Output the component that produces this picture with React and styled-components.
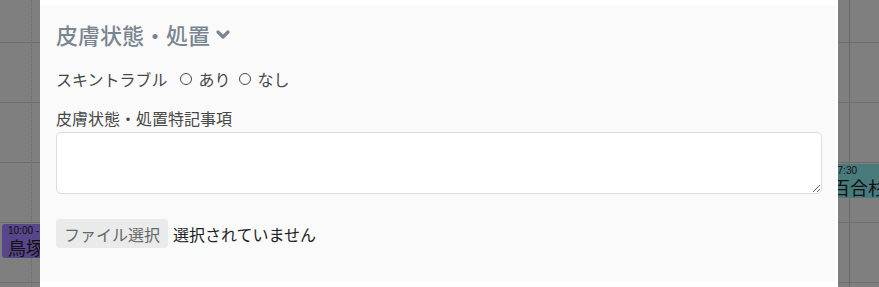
import React from "react";
import styled, { createGlobalStyle } from "styled-components";

const Global = createGlobalStyle`
  html, body { margin: 0; padding: 0; }
  body {
    width: 879px; height: 287px; overflow: hidden;
    font-family: "Noto Sans CJK JP", "Noto Sans", sans-serif;
    background: #808080;
  }
`;

const Stage = styled.div`
  position: relative;
  width: 879px;
  height: 287px;
  overflow: hidden;
  background: #7f7f7f;
`;

const Calendar = styled.div`
  position: absolute;
  inset: 0;
  background-image:
    repeating-linear-gradient(to bottom, transparent 0, transparent 42px, #6f6f6f 42px, #6f6f6f 43px, transparent 43px, transparent 60px);
`;

const VLine = styled.div`
  position: absolute;
  top: 0;
  bottom: 0;
  left: ${(p) => p.$x}px;
  width: 0;
  border-left: 1px ${(p) => (p.$dotted ? "dotted" : "solid")} #6a6a6a;
`;

const HLine = styled.div`
  position: absolute;
  left: 0;
  right: 0;
  top: ${(p) => p.$y}px;
  height: 1px;
  background: #6c6c6c;
`;

const Event = styled.div`
  position: absolute;
  left: ${(p) => p.$x}px;
  top: ${(p) => p.$y}px;
  width: ${(p) => p.$w}px;
  height: 34px;
  background: ${(p) => p.$bg};
  border-radius: 3px;
  padding: 1px 6px;
  box-sizing: border-box;
  color: #111;
  overflow: hidden;
  white-space: nowrap;
`;

const EventTime = styled.div`
  font-family: "Liberation Sans", Arial, sans-serif;
  font-size: 10px;
  line-height: 12px;
`;

const EventName = styled.div`
  font-size: 18px;
  line-height: 20px;
`;

const Modal = styled.div`
  position: absolute;
  left: 40px;
  top: 0;
  width: 798px;
  height: 287px;
  background: #ffffff;
  padding: 5px 2px 6px 0;
  box-sizing: border-box;
`;

const Section = styled.section`
  background: #fafafa;
  height: 100%;
  padding: 13px 14px 0 16px;
  box-sizing: border-box;
`;

const Title = styled.h3`
  margin: 0;
  font-size: 22px;
  line-height: 33px;
  font-weight: 500;
  color: #7a8592;
  display: flex;
  align-items: center;
  gap: 6px;
`;

const Row = styled.div`
  margin-top: 16px;
  display: flex;
  align-items: center;
  font-size: 16px;
  line-height: 24px;
  color: #474747;
`;

const RowLabel = styled.span`
  margin-right: 12px;
`;

const Radio = styled.span`
  display: inline-block;
  width: 10px;
  height: 10px;
  border: 1px solid #4a4a4a;
  border-radius: 50%;
  margin-right: 7px;
  margin-left: ${(p) => (p.$first ? 0 : 8)}px;
`;

const FieldLabel = styled.label`
  display: block;
  margin: 15px 0 2px;
  font-size: 16px;
  line-height: 24px;
  color: #474747;
`;

const TextArea = styled.textarea`
  display: block;
  width: 100%;
  height: 62px;
  box-sizing: border-box;
  border: 1px solid #dcdcdc;
  border-radius: 5px;
  background: #fff;
  margin: 0;
  resize: vertical;
  font-family: inherit;
`;

const FileRow = styled.div`
  margin-top: 25px;
  display: flex;
  align-items: center;
  font-size: 16px;
  color: #222;
`;

const FileButton = styled.span`
  display: inline-flex;
  align-items: center;
  height: 29px;
  padding: 0 8px;
  background: #e9eaea;
  border-radius: 4px;
  color: #666;
  margin-right: 5px;
`;

const Chevron = () => (
  <svg width="14" height="11" viewBox="0 0 14 11" aria-hidden="true">
    <polyline
      points="2,3 7,8 12,3"
      fill="none"
      stroke="#7a8592"
      strokeWidth="3.2"
      strokeLinecap="round"
      strokeLinejoin="round"
    />
  </svg>
);

export default function App() {
  return (
    <Stage>
      <Global />
      <Calendar />
      <VLine $x={31} $dotted />
      <VLine $x={849} />
      <HLine $y={162} />
      <Event $x={2} $y={224} $w={60} $bg="#58468a">
        <EventTime>10:00 - 11:00</EventTime>
        <EventName>鳥塚</EventName>
      </Event>
      <Event $x={826} $y={164} $w={60} $bg="#4a7b7c">
        <EventTime>17:30</EventTime>
        <EventName>百合杉</EventName>
      </Event>
      <Modal>
        <Section>
          <Title>
            皮膚状態・処置
            <Chevron />
          </Title>
          <Row>
            <RowLabel>スキントラブル</RowLabel>
            <Radio $first />
            あり
            <Radio />
            なし
          </Row>
          <FieldLabel>皮膚状態・処置特記事項</FieldLabel>
          <TextArea />
          <FileRow>
            <FileButton>ファイル選択</FileButton>
            選択されていません
          </FileRow>
        </Section>
      </Modal>
    </Stage>
  );
}
